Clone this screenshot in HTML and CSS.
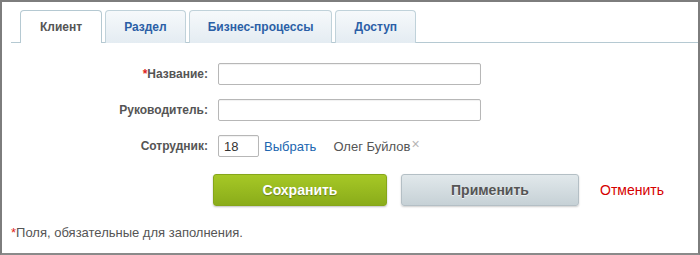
FILE: index.html
```html
<!DOCTYPE html>
<html lang="ru">
<head>
  <meta charset="UTF-8" />
  <title>Клиент</title>
  <link rel="stylesheet" href="styles.css">
</head>
<body>
  <div class="frame">
    <div class="tabs">
      <div class="tab active">Клиент</div>
      <div class="tab">Раздел</div>
      <div class="tab">Бизнес-процессы</div>
      <div class="tab">Доступ</div>
    </div>

    <form class="form">
      <label class="label"><span class="req">*</span>Название:</label>
      <div class="field"><input class="input wide" type="text"></div>

      <label class="label">Руководитель:</label>
      <div class="field"><input class="input wide" type="text"></div>

      <label class="label">Сотрудник:</label>
      <div class="field">
        <input class="input short" type="text" value="18">
        <a class="pick" href="#">Выбрать</a>
        <span class="person">Олег Буйлов<span class="remove">×</span></span>
      </div>
    </form>

    <div class="buttons">
      <button class="btn btn-save" type="button">Сохранить</button>
      <button class="btn btn-apply" type="button">Применить</button>
      <a class="cancel" href="#">Отменить</a>
    </div>

    <p class="note"><span class="req">*</span>Поля, обязательные для заполнения.</p>
  </div>
</body>
</html>
```

FILE: styles.css
```css
* {
  margin: 0;
  padding: 0;
  box-sizing: border-box;
}

body {
  font-family: "Liberation Sans", Arial, sans-serif;
  font-size: 13px;
  color: #555;
  background: #fff;
}

.frame {
  width: 700px;
  height: 255px;
  border: 2px solid #7d7d7d;
  border-bottom-color: #8a8a8a;
}

/* Tabs */
.tabs {
  display: flex;
  gap: 3px;
  margin: 8px 0 0 9px;
  padding-left: 9px;
  border-bottom: 1px solid #b5c9d2;
  height: 33px;
}

.tab {
  height: 33px;
  padding: 0 18px;
  display: flex;
  align-items: center;
  font-size: 12px;
  font-weight: bold;
  color: #2b5fa6;
  border: 1px solid #c0d2da;
  border-bottom: none;
  border-radius: 4px 4px 0 0;
  background: linear-gradient(#f6f9fb, #e4ecf2);
}

.tab.active {
  color: #555;
  background: #fff;
  border-color: #b5c9d2;
  margin-bottom: -1px;
  padding: 0 19px 0 19px;
}

/* Form */
.form {
  display: grid;
  grid-template-columns: 206px 1fr;
  column-gap: 10px;
  row-gap: 14px;
  margin-top: 20px;
}

.label {
  text-align: right;
  font-size: 12px;
  font-weight: bold;
  color: #555;
  align-self: center;
}

.req {
  color: #e0251b;
}

.field {
  display: flex;
  align-items: center;
  height: 22px;
}

.input {
  height: 22px;
  border: 1px solid #b7b7b7;
  border-radius: 2px;
  box-shadow: inset 0 1px 1px rgba(0, 0, 0, 0.06);
  font-family: inherit;
  font-size: 13px;
  color: #333;
  padding: 0 5px;
  outline: none;
}

.input.wide {
  width: 263px;
}

.input.short {
  width: 41px;
}

.pick {
  margin-left: 5px;
  color: #2066b0;
  text-decoration: none;
}

.person {
  margin-left: 17px;
  color: #555;
}

.remove {
  color: #b5b5b5;
  font-size: 14px;
  margin-left: 1px;
  position: relative;
  top: -2px;
}

/* Buttons */
.buttons {
  display: flex;
  align-items: center;
  padding-left: 211px;
  margin-top: 17px;
}

.btn {
  height: 32px;
  border-radius: 3px;
  font-family: inherit;
  font-size: 14px;
  font-weight: bold;
  cursor: pointer;
}

.btn-save {
  width: 174px;
  color: #fff;
  border: 1px solid #86a61a;
  background: linear-gradient(#a6c826, #8aac1a);
  text-shadow: 0 1px 1px rgba(0, 0, 0, 0.3);
  box-shadow: 0 1px 2px rgba(0, 0, 0, 0.25);
}

.btn-apply {
  width: 178px;
  margin-left: 14px;
  color: #555;
  border: 1px solid #b4bfc5;
  background: linear-gradient(#e1e8eb, #c6d1d6);
  text-shadow: 0 1px 0 rgba(255, 255, 255, 0.7);
  box-shadow: 0 1px 2px rgba(0, 0, 0, 0.2);
}

.cancel {
  margin-left: 21px;
  font-size: 14px;
  color: #d60000;
  text-decoration: none;
}

.note {
  margin: 19px 0 0 9px;
  font-size: 13px;
  color: #555;
}
```
